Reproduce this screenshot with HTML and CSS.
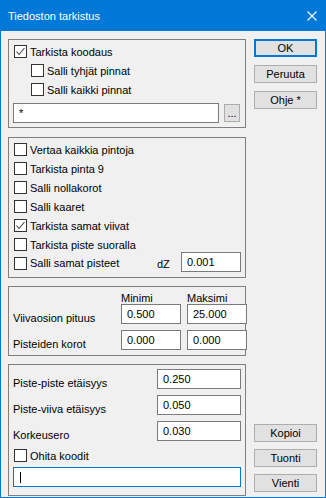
FILE: index.html
```html
<!DOCTYPE html>
<html lang="fi">
<head>
  <meta charset="UTF-8">
  <title>Tiedoston tarkistus</title>
  <link rel="stylesheet" href="styles.css">
</head>
<body>

  <div class="window">
    <div class="titlebar">
      <span class="title">Tiedoston tarkistus</span>
      <svg class="close" width="10" height="10" viewBox="0 0 10 10">
        <path d="M0.5 0.5 L9.5 9.5 M9.5 0.5 L0.5 9.5" stroke="#fff" stroke-width="1.1" fill="none"/>
      </svg>
    </div>

    <div class="main">
      <div class="groups">

        <div class="group g1">
          <div class="check"><span class="box on"></span>Tarkista koodaus</div>
          <div class="check sub"><span class="box"></span>Salli tyhjät pinnat</div>
          <div class="check sub"><span class="box"></span>Salli kaikki pinnat</div>
          <div class="pathrow">
            <input class="field path" type="text" value="*">
            <div class="dots">...</div>
          </div>
        </div>

        <div class="group g2">
          <div class="check"><span class="box"></span>Vertaa kaikkia pintoja</div>
          <div class="check"><span class="box"></span>Tarkista pinta 9</div>
          <div class="check"><span class="box"></span>Salli nollakorot</div>
          <div class="check"><span class="box"></span>Salli kaaret</div>
          <div class="check"><span class="box on"></span>Tarkista samat viivat</div>
          <div class="check"><span class="box"></span>Tarkista piste suoralla</div>
          <div class="check last">
            <span class="box"></span>Salli samat pisteet
            <span class="dz">dZ</span>
            <input class="field small" type="text" value="0.001">
          </div>
        </div>

        <div class="group g3">
          <span></span>
          <span class="head">Minimi</span>
          <span class="head">Maksimi</span>
          <span class="label">Viivaosion pituus</span>
          <input class="field" type="text" value="0.500">
          <input class="field" type="text" value="25.000">
          <span class="label">Pisteiden korot</span>
          <input class="field" type="text" value="0.000">
          <input class="field" type="text" value="0.000">
        </div>

        <div class="group g4">
          <div class="grid4">
            <span class="label">Piste-piste etäisyys</span>
            <input class="field" type="text" value="0.250">
            <span class="label">Piste-viiva etäisyys</span>
            <input class="field" type="text" value="0.050">
            <span class="label">Korkeusero</span>
            <input class="field" type="text" value="0.030">
          </div>
          <div class="check skip"><span class="box"></span>Ohita koodit</div>
          <div class="field focus"><span class="caret"></span></div>
        </div>

      </div>

      <div class="buttons">
        <div class="stack top">
          <div class="btn default">OK</div>
          <div class="btn">Peruuta</div>
          <div class="btn">Ohje *</div>
        </div>
        <div class="stack bottom">
          <div class="btn">Kopioi</div>
          <div class="btn">Tuonti</div>
          <div class="btn">Vienti</div>
        </div>
      </div>
    </div>
  </div>

</body>
</html>
```

FILE: styles.css
```css
* {
  box-sizing: border-box;
}

body {
  margin: 0;
  font-family: "Liberation Sans", Arial, sans-serif;
  font-size: 11px;
  color: #000;
}

.window {
  width: 326px;
  height: 498px;
  background-color: #f0f0f0;
  border: 1px solid #0078d7;
  border-top: none;
  display: flex;
  flex-direction: column;
}

.titlebar {
  height: 31px;
  background-color: #0078d7;
  color: #fff;
  display: flex;
  align-items: center;
  justify-content: space-between;
  padding: 0 9px 0 8px;
  margin: 0 -1px;
}

.main {
  flex: 1;
  display: flex;
  gap: 8px;
  padding-left: 7px;
}

.groups {
  width: 238px;
  padding-top: 8px;
}

.group {
  border: 1px solid #7f7f7f;
  padding: 2px 4px 0 4px;
}

.g1 { height: 89px; margin-bottom: 9px; }
.g2 { height: 141px; margin-bottom: 8px; }
.g3 { height: 70px; margin-bottom: 8px; }
.g4 { height: 132px; padding-top: 4px; }

/* checkbox rows */
.check {
  height: 19px;
  display: flex;
  align-items: center;
  padding-left: 1px;
  white-space: nowrap;
}

.check.sub {
  padding-left: 18px;
}

.box {
  width: 13px;
  height: 13px;
  border: 1px solid #333;
  background-color: #fff;
  margin-right: 3px;
  flex: none;
}

.box.on {
  background: #fff url("data:image/svg+xml,%3Csvg xmlns='http://www.w3.org/2000/svg' width='11' height='11'%3E%3Cpath d='M1.5 5.5 L4 8.5 L9.5 2' stroke='%23444' stroke-width='1.1' fill='none'/%3E%3C/svg%3E") no-repeat center;
}

.check.last {
  align-items: flex-start;
  line-height: 19px;
}

.check.last .box {
  margin-top: 3px;
}

.dz {
  margin-left: auto;
  width: 24px;
  padding-top: 1px;
}

/* text fields */
.field {
  height: 20px;
  border: 1px solid #7a7a7a;
  background-color: #fff;
  font-family: "Liberation Sans", Arial, sans-serif;
  font-size: 11px;
  line-height: 18px;
  padding: 0 5px;
  margin: 0;
  color: #000;
  outline: none;
  width: 100%;
}

.field.small {
  width: 60px;
  margin-top: -2px;
}

.pathrow {
  margin-top: 4px;
  display: flex;
  align-items: center;
  gap: 5px;
}

.field.path {
  width: 206px;
}

.dots {
  width: 16px;
  height: 18px;
  background-color: #e1e1e1;
  border: 1px solid #adadad;
  text-align: center;
  line-height: 16px;
}

/* min / max grid */
.g3 {
  display: grid;
  grid-template-columns: 102px 60px 60px;
  grid-template-rows: 17px 20px 26px;
  column-gap: 6px;
  padding-top: 0;
  align-content: start;
}

.g3 .head {
  padding-top: 5px;
  line-height: 12px;
}

.g3 .field {
  align-self: end;
}

.label {
  align-self: end;
  line-height: 12px;
  white-space: nowrap;
}

.grid4 {
  display: grid;
  grid-template-columns: 144px 84px;
  grid-auto-rows: 20px;
  row-gap: 6px;
}

.check.skip {
  margin-top: 5px;
}

.field.focus {
  border-color: #0078d7;
  margin-top: 2px;
  padding-left: 6px;
  padding-top: 4px;
}

.caret {
  display: block;
  width: 1px;
  height: 11px;
  background-color: #000;
}

/* right buttons */
.buttons {
  width: 63px;
  display: flex;
  flex-direction: column;
  justify-content: space-between;
  padding: 8px 0 5px;
}

.stack {
  display: flex;
  flex-direction: column;
}

.stack.top {
  gap: 8px;
}

.stack.bottom {
  gap: 7px;
}

.btn {
  height: 18px;
  background-color: #e1e1e1;
  border: 1px solid #adadad;
  text-align: center;
  line-height: 16px;
}

.btn.default {
  border: 2px solid #0078d7;
  line-height: 14px;
}
```
